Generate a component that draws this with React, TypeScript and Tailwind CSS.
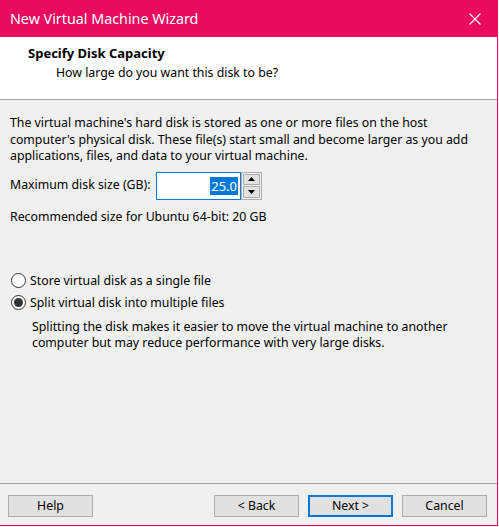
import React from "react";

const font = { fontFamily: '"Noto Sans", "Open Sans", sans-serif' };

function Radio({ checked }: { checked?: boolean }) {
  return (
    <span className="relative inline-flex h-[15px] w-[15px] shrink-0 items-center justify-center rounded-full border border-[#333333] bg-white">
      {checked && <span className="h-[9px] w-[9px] rounded-full bg-[#333333]" />}
    </span>
  );
}

function Btn({ label, primary }: { label: string; primary?: boolean }) {
  return (
    <div
      className={
        "flex h-[22px] w-[85px] items-center justify-center bg-[#e1e1e1] text-[12.3px] text-black " +
        (primary ? "border-2 border-[#0078d7]" : "border border-[#adadad]")
      }
    >
      {label}
    </div>
  );
}

export default function App() {
  return (
    <div className="h-[527px] w-[499px] bg-[#f3f3f3]" style={font}>
      <div className="flex h-[526px] w-[498px] flex-col border-b border-r border-[#ea0a60] bg-[#f0f0f0]">
        {/* Title bar */}
        <div className="flex h-[37px] shrink-0 items-center justify-between bg-[#ea0a60] pl-[10px] pr-[16px] pt-[1px]">
          <span className="text-[14.3px] leading-none text-white">New Virtual Machine Wizard</span>
          <svg width="12" height="12" viewBox="0 0 12 12">
            <path d="M0.5 0.5 L11.5 11.5 M11.5 0.5 L0.5 11.5" stroke="white" strokeWidth="1.1" />
          </svg>
        </div>
        {/* Header */}
        <div className="flex h-[63px] shrink-0 flex-col border-b border-[#a0a0a0] bg-white pl-[28px] pt-[7px]">
          <div className="text-[13px] font-bold leading-[19px] text-black">Specify Disk Capacity</div>
          <div className="pl-[28px] text-[12.3px] leading-[20px] text-black">How large do you want this disk to be?</div>
        </div>
        {/* Body */}
        <div className="flex flex-1 flex-col px-[10px] pt-[15px] text-[12.3px] text-black">
          <div className="leading-[16.5px]">
            The virtual machine's hard disk is stored as one or more files on the host
            <br />
            computer's physical disk. These file(s) start small and become larger as you add
            <br />
            applications, files, and data to your virtual machine.
          </div>
          <div className="mt-[7px] flex items-center">
            <span className="w-[146px]">Maximum disk size (GB):</span>
            <div className="flex h-[28px] w-[85px] items-center justify-end border border-[#0078d7] bg-white pr-[2px]">
              <span className="bg-[#0078d7] px-[1px] text-[13px] leading-[18px] text-white">25.0</span>
            </div>
            <div className="flex h-[28px] w-[21px] flex-col gap-[1px] border border-[#adadad] bg-[#f0f0f0] p-[1px]">
              <div className="flex flex-1 items-center justify-center border border-[#adadad] bg-[#e1e1e1]">
                <svg width="7" height="4" viewBox="0 0 7 4"><path d="M3.5 0 L7 4 L0 4 Z" fill="black" /></svg>
              </div>
              <div className="flex flex-1 items-center justify-center border border-[#adadad] bg-[#e1e1e1]">
                <svg width="7" height="4" viewBox="0 0 7 4"><path d="M0 0 L7 0 L3.5 4 Z" fill="black" /></svg>
              </div>
            </div>
          </div>
          <div className="mt-[9px] leading-[16px]">Recommended size for Ubuntu 64-bit: 20 GB</div>

          <div className="mt-[47px] flex h-[18px] items-center gap-[4px]">
            <span className="ml-[1px] flex"><Radio /></span>
            <span className="leading-[16px]">Store virtual disk as a single file</span>
          </div>
          <div className="mt-[4px] flex h-[18px] items-center gap-[4px]">
            <span className="ml-[1px] flex"><Radio checked /></span>
            <span className="leading-[16px]">Split virtual disk into multiple files</span>
          </div>
          <div className="mt-[7px] pl-[22px] leading-[16.5px]">
            Splitting the disk makes it easier to move the virtual machine to another
            <br />
            computer but may reduce performance with very large disks.
          </div>
        </div>
        {/* Footer */}
        <div className="flex h-[42px] shrink-0 items-start border-t border-[#a0a0a0] pl-[8px] pr-[10px] pt-[11px]">
          <Btn label="Help" />
          <div className="ml-auto flex gap-[9px]">
            <Btn label="< Back" />
            <Btn label="Next >" primary />
            <Btn label="Cancel" />
          </div>
        </div>
      </div>
    </div>
  );
}
